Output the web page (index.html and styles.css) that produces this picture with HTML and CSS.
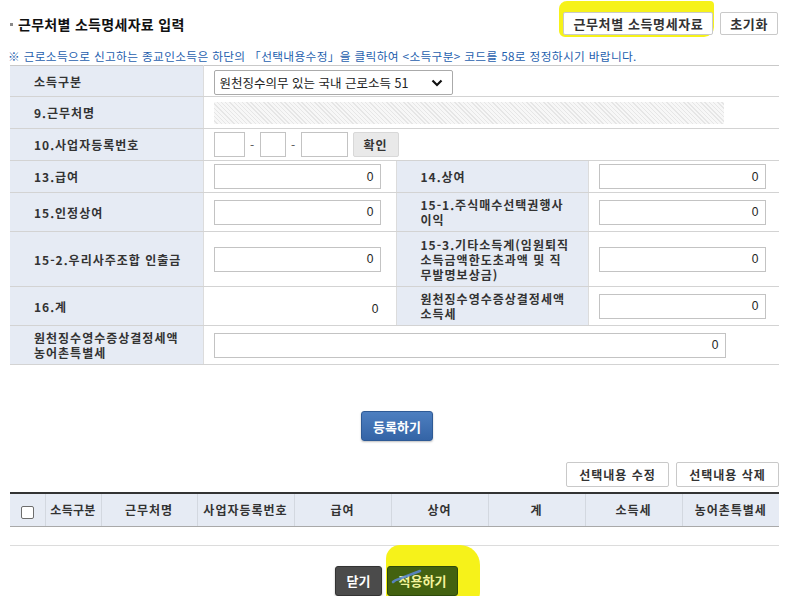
FILE: index.html
```html
<!DOCTYPE html>
<html lang="ko">
<head>
<meta charset="utf-8">
<title>근무처별 소득명세자료 입력</title>
<link rel="stylesheet" href="styles.css">
</head>
<body>
<div class="page">
  <header class="top">
    <h1 class="title"><span class="bullet"></span>근무처별 소득명세자료 입력</h1>
    <div class="top-actions">
      <span class="mark mark-top"><button class="btn btn-line btn-lg">근무처별 소득명세자료</button></span>
      <button class="btn btn-line btn-lg">초기화</button>
    </div>
  </header>
  <p class="notice">※ 근로소득으로 신고하는 종교인소득은 하단의 「선택내용수정」을 클릭하여 &lt;소득구분&gt; 코드를 58로 정정하시기 바랍니다.</p>

  <table class="form">
    <colgroup><col class="c1"><col class="c2"><col class="c3"><col class="c4"></colgroup>
    <tr class="r1">
      <th>소득구분</th>
      <td colspan="3">
        <span class="select-wrap">
          <select class="select"><option>원천징수의무 있는 국내 근로소득 51</option></select>
          <svg class="chev" width="12" height="8" viewBox="0 0 12 8"><path d="M1.5 1.5 L6 6 L10.5 1.5" fill="none" stroke="#111" stroke-width="2.2"/></svg>
        </span>
      </td>
    </tr>
    <tr class="r2">
      <th>9.근무처명</th>
      <td colspan="3"><div class="hatch"></div></td>
    </tr>
    <tr class="r3">
      <th>10.사업자등록번호</th>
      <td colspan="3">
        <div class="bizno">
          <input class="inp w31" type="text"><span class="dash">-</span><input class="inp w26" type="text"><span class="dash">-</span><input class="inp w47" type="text"><button class="btn btn-gray">확인</button>
        </div>
      </td>
    </tr>
    <tr class="r4">
      <th>13.급여</th>
      <td><input class="inp num" type="text" value="0"></td>
      <th class="rl">14.상여</th>
      <td><input class="inp num" type="text" value="0"></td>
    </tr>
    <tr class="r5">
      <th>15.인정상여</th>
      <td><input class="inp num" type="text" value="0"></td>
      <th class="rl">15-1.주식매수선택권행사이익</th>
      <td><input class="inp num" type="text" value="0"></td>
    </tr>
    <tr class="r6">
      <th>15-2.우리사주조합 인출금</th>
      <td><input class="inp num" type="text" value="0"></td>
      <th class="rl">15-3.기타소득계(임원퇴직소득금액한도초과액 및 직무발명보상금)</th>
      <td><input class="inp num" type="text" value="0"></td>
    </tr>
    <tr class="r7">
      <th>16.계</th>
      <td class="sum">0</td>
      <th class="rl">원천징수영수증상결정세액 소득세</th>
      <td><input class="inp num" type="text" value="0"></td>
    </tr>
    <tr class="r8">
      <th>원천징수영수증상결정세액 농어촌특별세</th>
      <td colspan="3"><input class="inp num wide" type="text" value="0"></td>
    </tr>
  </table>

  <div class="register"><button class="btn btn-blue">등록하기</button></div>

  <div class="list-actions">
    <button class="btn btn-line btn-sm">선택내용 수정</button>
    <button class="btn btn-line btn-sm">선택내용 삭제</button>
  </div>

  <table class="list">
    <colgroup>
      <col class="k0"><col class="k1"><col class="k2"><col class="k3"><col class="k4"><col class="k4"><col class="k4"><col class="k4"><col class="k4">
    </colgroup>
    <tr>
      <th><input class="chk" type="checkbox"></th>
      <th class="tight">소득구분</th>
      <th>근무처명</th>
      <th>사업자등록번호</th>
      <th>급여</th>
      <th>상여</th>
      <th>계</th>
      <th>소득세</th>
      <th>농어촌특별세</th>
    </tr>
  </table>
  <div class="list-end"></div>

  <div class="bottom">
    <button class="btn btn-dark">닫기</button>
    <span class="mark mark-bottom"><button class="btn btn-green">적용하기<svg class="scribble" width="40" height="20" viewBox="0 0 40 20"><path d="M5 15 Q7 13 11 12 L32 4" fill="none" stroke="#5a88d8" stroke-width="2.6" stroke-linecap="round" opacity="0.85"/></svg></button></span>
  </div>
</div>
</body>
</html>
```

FILE: styles.css
```css
* { box-sizing: border-box; }

body {
  margin: 0;
  background: #fff;
  font-family: "Noto Sans CJK KR", "Noto Sans", sans-serif;
  color: #333;
}

.page {
  padding: 0 10px 0 10px;
}

/* header */
.top {
  display: flex;
  justify-content: space-between;
  align-items: center;
  padding-top: 12px;
  height: 35px;
}

.title {
  margin: 0;
  padding-top: 2px;
  font-size: 14px;
  line-height: 23px;
  font-weight: 700;
  color: #111;
  display: flex;
  align-items: center;
  letter-spacing: 0.3px;
}

.bullet {
  width: 3px;
  height: 3px;
  background: #8a8a8a;
  margin-right: 5px;
}

.top-actions {
  display: flex;
  align-items: center;
  gap: 7px;
  margin-right: 1px;
}

.mark {
  display: inline-flex;
  background: #f6f21a;
}

.mark-top {
  padding: 11px 1px 2px 4px;
  margin: -11px -1px -2px -4px;
  border-radius: 8px 4px 10px 6px;
}

.mark-bottom {
  padding: 21px 22px 12px 1px;
  margin: -21px -22px -12px -1px;
  border-radius: 14px 20px 16px 10px;
}

/* buttons */
.btn {
  font-family: "Noto Sans CJK KR", "Noto Sans", sans-serif;
  font-weight: 700;
  cursor: pointer;
  display: inline-flex;
  align-items: center;
  justify-content: center;
  padding: 0;
}

.btn-line {
  background: #fff;
  border: 1px solid #c9c9c9;
  border-radius: 2px;
  color: #333;
}

.btn-lg {
  height: 23px;
  font-size: 13px;
  letter-spacing: 0.6px;
  padding: 0 9px;
}

.btn-sm {
  height: 25px;
  font-size: 12px;
  letter-spacing: 1px;
  width: 103px;
}

.btn-gray {
  height: 25px;
  width: 46px;
  margin-left: 5px;
  background: #e9e9e9;
  border: 1px solid #d8d8d8;
  border-radius: 2px;
  font-size: 12px;
  letter-spacing: 1px;
  color: #333;
}

.btn-blue {
  width: 72px;
  height: 30px;
  border: 1px solid #2e5a95;
  border-radius: 3px;
  background: linear-gradient(#4d7fc0, #3464a6);
  color: #fff;
  font-size: 13px;
  box-shadow: 0 1px 2px rgba(0,0,0,0.25);
}

.btn-dark {
  width: 47px;
  height: 30px;
  border: 1px solid #333;
  border-radius: 3px;
  background: #4b4b4b;
  color: #fff;
  font-size: 13px;
  box-shadow: 0 1px 2px rgba(0,0,0,0.3);
}

.btn-green {
  position: relative;
  width: 71px;
  height: 30px;
  border: 1px solid #2e4a0a;
  border-radius: 3px;
  background: #436210;
  color: #f3f39a;
  font-size: 13px;
}

.scribble {
  position: absolute;
  left: 0;
  top: 0;
}

/* notice */
.notice {
  margin: 14px 0 2px -2px;
  font-size: 11.7px;
  letter-spacing: 0.35px;
  line-height: 14px;
  color: #1f5fae;
  white-space: nowrap;
}

/* form table */
.form {
  width: 769px;
  border-collapse: collapse;
  table-layout: fixed;
  border-top: 1px solid #c9c9c9;
}

.c1 { width: 193px; }
.c2 { width: 193px; }
.c3 { width: 192px; }
.c4 { width: 191px; }

.form th,
.form td {
  border-bottom: 1px solid #d3d3d3;
  padding: 0;
  vertical-align: middle;
}

.form th {
  background: #e6ebf4;
  text-align: left;
  font-size: 12px;
  font-weight: 700;
  line-height: 15px;
  letter-spacing: 1px;
  color: #333;
  padding: 0 12px 0 24px;
  border-right: 1px solid #dcdcdc;
}

.form th.rl {
  border-left: 1px solid #dcdcdc;
  padding: 0 14px 0 24px;
}

.form td {
  padding-left: 10px;
}

.r1 { height: 31px; }
.r2 { height: 32px; }
.r3 { height: 32px; }
.r4 { height: 32px; }
.r5 { height: 39px; }
.r6 { height: 55px; }
.r7 { height: 39px; }
.r8 { height: 39px; }

.select-wrap {
  position: relative;
  display: inline-block;
  vertical-align: middle;
}

.select {
  appearance: none;
  -webkit-appearance: none;
  width: 239px;
  height: 25px;
  border: 1px solid #aaa;
  border-radius: 2px;
  background: #fff;
  font-family: "Noto Sans CJK KR", "Noto Sans", sans-serif;
  font-size: 12.5px;
  color: #222;
  padding: 0 0 0 5px;
  display: block;
}

.chev {
  position: absolute;
  right: 10px;
  top: 9px;
}

.hatch {
  width: 510px;
  height: 22px;
  background: repeating-linear-gradient(45deg, #f7f7f7 0 2px, #e6e6e6 2px 3px);
}

.bizno {
  display: flex;
  align-items: center;
}

.dash {
  width: 15px;
  text-align: center;
  font-size: 12px;
  color: #555;
}

.inp {
  height: 25px;
  border: 1px solid #c3c3c3;
  background: #fff;
  font-family: "Liberation Sans", sans-serif;
  font-size: 12px;
  color: #222;
  padding: 0 6px;
  outline: none;
}

.w31 { width: 31px; }
.w26 { width: 26px; }
.w47 { width: 47px; }

.num {
  width: 167px;
  text-align: right;
  display: block;
}

.num.wide {
  width: 512px;
}

.form td.sum {
  text-align: right;
  padding: 6px 17px 0 0;
  font-family: "Liberation Sans", sans-serif;
  font-size: 12px;
  color: #222;
}

/* register */
.register {
  display: flex;
  justify-content: center;
  margin-top: 46px;
  padding-left: 5px;
}

.list-actions {
  display: flex;
  justify-content: flex-end;
  gap: 7px;
  margin-top: 21px;
}

/* list table */
.list {
  width: 769px;
  margin-top: 5px;
  border-collapse: collapse;
  table-layout: fixed;
  border-top: 2px solid #333;
}

.k0 { width: 35px; }
.k1 { width: 56px; }
.k2 { width: 96px; }
.k3 { width: 97px; }
.k4 { width: 97px; }

.list th {
  height: 33px;
  background: #e6ebf4;
  border-bottom: 1px solid #a9a9a9;
  border-left: 1px solid #d3d8e0;
  font-size: 12px;
  font-weight: 700;
  letter-spacing: 1px;
  color: #333;
  text-align: center;
  padding: 0;
  white-space: nowrap;
}

.list th:first-child { border-left: none; }

.list th.tight { letter-spacing: 0.3px; }

.chk {
  appearance: none;
  -webkit-appearance: none;
  width: 13px;
  height: 13px;
  margin: 3px 0 0 1px;
  border: 1px solid #6d6d6d;
  border-radius: 2px;
  background: #fff;
  vertical-align: middle;
}

.list-end {
  margin-top: 18px;
  border-top: 1px solid #dcdcdc;
}

/* bottom */
.bottom {
  display: flex;
  justify-content: center;
  gap: 5px;
  margin-top: 20px;
  padding-left: 4px;
}
```
